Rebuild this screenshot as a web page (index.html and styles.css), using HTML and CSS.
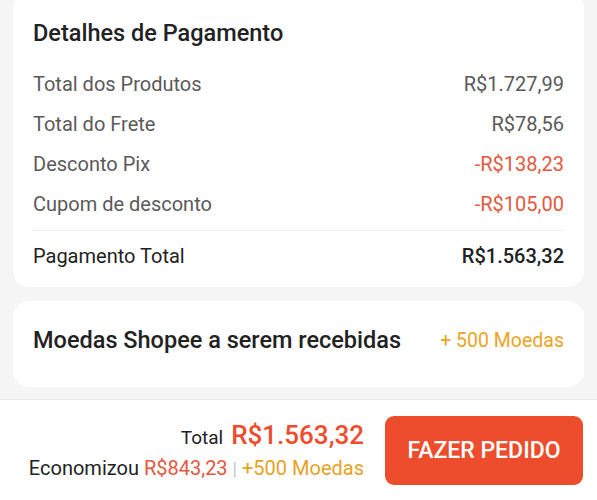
FILE: index.html
```html
<!DOCTYPE html>
<html lang="pt-BR">
<head>
<meta charset="utf-8">
<title>Detalhes de Pagamento</title>
<link rel="stylesheet" href="styles.css">
</head>
<body>
<main class="content">
  <section class="card details">
    <h2 class="card-title">Detalhes de Pagamento</h2>
    <div class="row"><span>Total dos Produtos</span><span>R$1.727,99</span></div>
    <div class="row"><span>Total do Frete</span><span>R$78,56</span></div>
    <div class="row"><span>Desconto Pix</span><span class="neg">-R$138,23</span></div>
    <div class="row"><span>Cupom de desconto</span><span class="neg">-R$105,00</span></div>
    <hr class="divider">
    <div class="row total"><span>Pagamento Total</span><span class="strong">R$1.563,32</span></div>
  </section>
  <section class="card coins">
    <span class="coins-title">Moedas Shopee a serem recebidas</span>
    <span class="coins-value">+ 500 Moedas</span>
  </section>
</main>
<footer class="footer">
  <div class="summary">
    <div class="sum-line"><span class="sum-label">Total</span><span class="sum-price">R$1.563,32</span></div>
    <div class="save-line">Economizou <span class="save-amount">R$843,23</span><span class="sep">|</span><span class="save-coins">+500 Moedas</span></div>
  </div>
  <button class="order-btn">FAZER PEDIDO</button>
</footer>
</body>
</html>
```

FILE: styles.css
```css
* { box-sizing: border-box; }
html, body {
  margin: 0;
  padding: 0;
  background: #f5f5f5;
  font-family: Roboto, "Noto Sans", Arial, sans-serif;
  overflow: hidden;
}
.content {
  display: flow-root;
  padding: 0 13px;
  height: 399px;
}
.card {
  background: #fff;
  border-radius: 16px;
}
.details {
  margin-top: -8px;
  padding: 27px 20px 11px 20px;
}
.card-title {
  margin: 0 0 17px 0;
  font-size: 23.5px;
  line-height: 28px;
  font-weight: 500;
  color: #222;
}
.row {
  display: flex;
  justify-content: space-between;
  align-items: center;
  height: 40px;
  font-size: 20px;
  color: #5a5a5a;
}
.neg { color: #e4583e; }
.divider {
  border: 0;
  border-top: 1px solid #ececec;
  margin: 6px 0 5px 0;
}
.row.total { color: #222; }
.strong { font-weight: 500; color: #222; }
.coins {
  margin-top: 14px;
  height: 86px;
  padding: 0 20px 8px 20px;
  display: flex;
  justify-content: space-between;
  align-items: center;
}
.coins-title {
  font-size: 23.5px;
  font-weight: 500;
  color: #222;
}
.coins-value {
  font-size: 19.5px;
  color: #eda323;
}
.footer {
  border-top: 1px solid #ebebeb;
  background: #fff;
  height: 101px;
  display: flex;
  justify-content: flex-end;
  align-items: center;
  padding: 0 14px 0 0;
  gap: 21px;
}
.summary {
  display: flex;
  flex-direction: column;
  align-items: flex-end;
  gap: 2px;
  padding-top: 2px;
}
.sum-line {
  display: flex;
  align-items: baseline;
  gap: 8px;
  line-height: 30px;
}
.sum-label { font-size: 19px; color: #222; }
.sum-price { font-size: 26px; font-weight: 500; color: #ee4d2d; }
.save-line { font-size: 20px; line-height: 26px; color: #222; }
.save-amount { color: #e4583e; }
.sep { color: #c4c4c4; margin: 0 5px; font-size: 18px; }
.save-coins { color: #e6a21f; }
.order-btn {
  width: 198px;
  height: 69px;
  border: 0;
  border-radius: 9px;
  background: #ee4d2d;
  color: #fff;
  font-family: Roboto, "Noto Sans", Arial, sans-serif;
  font-size: 23px;
  font-weight: 500;
}
```
